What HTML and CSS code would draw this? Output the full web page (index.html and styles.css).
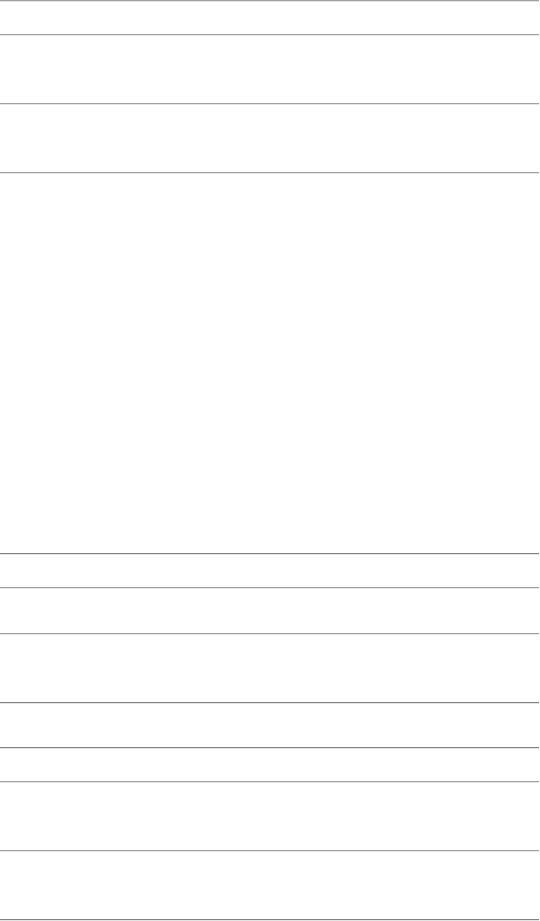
FILE: index.html
```html
<!DOCTYPE html>
<html>
<head>
<meta charset="utf-8">
<link rel="stylesheet" href="styles.css">
</head>
<body>
<div class="page">
  <div class="rule light"></div>
  <div class="gap h32"></div>
  <div class="rule light"></div>
  <div class="gap h67"></div>
  <div class="rule light"></div>
  <div class="gap h67"></div>
  <div class="rule light"></div>
  <div class="gap h379"></div>
  <div class="rule dark"></div>
  <div class="gap h32"></div>
  <div class="rule light"></div>
  <div class="gap h44"></div>
  <div class="rule light"></div>
  <div class="gap h67"></div>
  <div class="rule dark"></div>
  <div class="gap h43"></div>
  <div class="rule dark"></div>
  <div class="gap h32"></div>
  <div class="rule light"></div>
  <div class="gap h67"></div>
  <div class="rule light"></div>
  <div class="gap h67"></div>
  <div class="rule dark"></div>
</div>
</body>
</html>
```
FILE: styles.css
```css
html, body {
  margin: 0;
  padding: 0;
  background: #ffffff;
  font-family: "Liberation Sans", Arial, sans-serif;
}
.page {
  display: flex;
  flex-direction: column;
  width: 539px;
}
.rule {
  height: 0;
  border-top: 1px solid #a0a0a0;
  border-bottom: 1px solid #e4e4e4;
}
.rule.dark {
  border-top-color: #808080;
}
.h32 { height: 32px; }
.h43 { height: 43px; }
.h44 { height: 44px; }
.h67 { height: 67px; }
.h379 { height: 379px; }
```
